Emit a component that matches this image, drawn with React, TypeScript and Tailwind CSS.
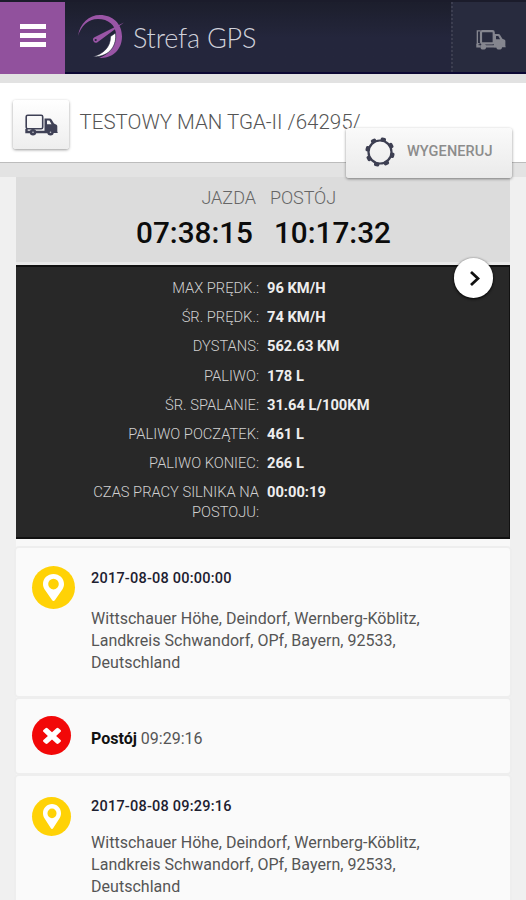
interface Stat {
  label: string;
  value: string;
}

interface RouteEvent {
  type: "point" | "stop";
  time: string;
  address?: string[];
}

const ADDRESS = [
  "Wittschauer Höhe, Deindorf, Wernberg-Köblitz,",
  "Landkreis Schwandorf, OPf, Bayern, 92533,",
  "Deutschland",
];

const STATS: Stat[] = [
  { label: "MAX PRĘDK.:", value: "96 KM/H" },
  { label: "ŚR. PRĘDK.:", value: "74 KM/H" },
  { label: "DYSTANS:", value: "562.63 KM" },
  { label: "PALIWO:", value: "178 L" },
  { label: "ŚR. SPALANIE:", value: "31.64 L/100KM" },
  { label: "PALIWO POCZĄTEK:", value: "461 L" },
  { label: "PALIWO KONIEC:", value: "266 L" },
  { label: "CZAS PRACY SILNIKA NA POSTOJU:", value: "00:00:19" },
];

const EVENTS: RouteEvent[] = [
  { type: "point", time: "2017-08-08 00:00:00", address: ADDRESS },
  { type: "stop", time: "09:29:16" },
  { type: "point", time: "2017-08-08 09:29:16", address: ADDRESS },
];

function Logo() {
  return (
    <svg className="w-[46px] h-[44px]" viewBox="0 0 46 44" fill="none">
      <path d="M0 21C2 8 11 0 22 0c13 0 22 9 22 21.500C44 35 34 44 21 42.800c10-3 17-12 17-22.800C38 10 30 4 20 4 10 4 3 11 0 21Z" fill="#9a55a6" />
      <path d="M32.500 21.500 37.500 18C39 29 33 42 15 41.800c10-3 17.500-9 17.500-20.300Z" fill="#fff" stroke="#22243a" strokeWidth=".6" />
      <path d="M46 7.500 16.500 22.300a2.900 2.900 0 1 0 3 5L46 7.500Z" fill="#9a55a6" />
      <circle cx="17.700" cy="25" r="1.100" fill="#22243a" />
    </svg>
  );
}

function TruckIcon({ className, double }: { className: string; double?: boolean }) {
  return (
    <svg className={className} viewBox="0 0 33 22" fill="none" stroke="currentColor">
      {double && <path d="M5 1H1.500v14H4" strokeWidth="1.500" />}
      <rect x={double ? 5.5 : 1.2} y="1.200" width={double ? 14 : 16.500} height="13.500" rx="1.500" strokeWidth={double ? 2.4 : 1.6} />
      <path d="M1.500 15v3H5M10 18h13" strokeWidth="2.400" />
      <path fillRule="evenodd" d="M19.500 4.500h5c1 0 1.700.4 2.200 1.200L29 9.500l2.500 1.200c.6.400.8.800.8 1.500V17.500l.5 1.500H19.500V4.500Zm2.500 2v3.800h4.500l-1.800-3.300c-.2-.4-.5-.5-1-.5H22Z" fill="currentColor" stroke="none" />
      <circle cx="8" cy="18.300" r="3.200" fill="currentColor" stroke="none" />
      <circle cx="25.500" cy="18.300" r="3.200" fill="currentColor" stroke="none" />
      {!double && (
        <>
          <circle cx="8" cy="18.300" r=".8" fill="#c9cad0" stroke="none" />
          <circle cx="25.500" cy="18.300" r=".8" fill="#c9cad0" stroke="none" />
        </>
      )}
    </svg>
  );
}

function GearIcon() {
  return (
    <svg className="w-[30px] h-[30px] text-[#3d3f52]" viewBox="-15 -15 30 30" fill="none" stroke="currentColor">
      <circle r="11.500" strokeWidth="2.200" />
      {[15, 60, 105, 150, 195, 240, 285, 330].map((deg) => (
        <rect key={deg} x="-2.700" y="-14.700" width="5.400" height="4" rx="1.500" fill="currentColor" stroke="none" transform={`rotate(${deg})`} />
      ))}
    </svg>
  );
}

function EventIcon({ type, large }: { type: RouteEvent["type"]; large: boolean }) {
  if (type === "stop") {
    return (
      <div className="w-[39px] h-[39px] rounded-full bg-[#f20808] flex items-center justify-center">
        <svg className="w-[18px] h-[18px] mb-0.5 ml-px" viewBox="302 238 1188 1316" preserveAspectRatio="none" fill="#fff">
          <path d="M1490 1322q0 40-28 68l-136 136q-28 28-68 28t-68-28l-294-294-294 294q-28 28-68 28t-68-28l-136-136q-28-28-28-68t28-68l294-294-294-294q-28-28-28-68t28-68l136-136q28-28 68-28t68 28l294 294 294-294q28-28 68-28t68 28l136 136q28 28 28 68t-28 68l-294 294 294 294q28 28 28 68z" />
        </svg>
      </div>
    );
  }
  return (
    <div className={`${large ? "w-[43px] h-[43px]" : "w-[39px] h-[39px]"} rounded-full bg-[#ffd206] flex items-center justify-center`}>
      <svg className={large ? "w-[21px] h-[27px]" : "w-[18px] h-[25px]"} viewBox="0 0 21 27" preserveAspectRatio="none" fill="#fff">
        <path fillRule="evenodd" d="M10.500 0C16.300 0 21 4.300 21 10c0 2-.6 3.600-1.500 5.200L12 26c-.8 1.300-2.200 1.300-3 0L1.500 15.200C.6 13.600 0 12 0 10 0 4.300 4.700 0 10.500 0Zm0 4.800a5.300 5.300 0 1 0 0 10.600 5.300 5.300 0 0 0 0-10.600Z" />
      </svg>
    </div>
  );
}

function Header() {
  return (
    <header className="h-[74px] flex border-t-2 border-[#1b1c2b] bg-linear-to-b from-[#1c1e2c] to-[#24263c] to-50% shadow-[inset_0_-2px_0_#0b0733]">
      <button className="w-[65px] bg-[#91519d] flex flex-col items-center pt-[22px] gap-1">
        <span className="w-[26px] h-[5px] bg-white" />
        <span className="w-[26px] h-[5px] bg-white" />
        <span className="w-[26px] h-[5px] bg-white" />
      </button>
      <div className="flex-1 flex pl-[13px] pt-[13px]">
        <Logo />
        <span className="ml-[9px] mt-[4px] font-['Lato'] font-light text-[27px] leading-[38px] tracking-[-0.2px] text-[#d0d1da] whitespace-nowrap">
          Strefa GPS
        </span>
      </div>
      <div className="w-[75px] mb-0.5 border-l-2 border-dotted border-[#3c3e50] bg-[#282b3e] pt-[28px] pl-[22px]">
        <TruckIcon className="w-[32px] h-[20px] text-[#85868f]" double />
      </div>
    </header>
  );
}

export default function App() {
  return (
    <div className="w-full h-[900px] overflow-hidden bg-[#f0f0f0] font-['Roboto',sans-serif]">
      <Header />
      <div className="h-[9px] bg-[#e2e2e2]" />
      <div className="relative h-[80px] bg-white border-b border-[#bcbcbc] flex pl-[13px] pt-[17px]">
        <div className="w-[56px] h-[49px] rounded-[3px] bg-linear-to-b from-white to-[#eeeeee] shadow-[0_1px_3px_rgba(0,0,0,0.4)] flex items-center justify-center">
          <TruckIcon className="w-[33px] h-[22px] text-[#3f4156]" />
        </div>
        <h1 className="ml-[10.500px] mt-[8px] font-light text-[20.500px] leading-[28px] text-[#555] whitespace-nowrap">
          TESTOWY MAN TGA-II /64295/
        </h1>
        <button className="absolute left-[346px] top-[45px] w-[166px] h-[50px] rounded-[3px] bg-linear-to-b from-[#fafafa] to-[#eaeaea] shadow-[0_1px_3px_rgba(0,0,0,0.45)] flex items-center pl-[19px] pb-0.5">
          <GearIcon />
          <span className="ml-[12px] text-[14.500px] tracking-[0.1px] text-[#8c8c8c] font-medium">WYGENERUJ</span>
        </button>
      </div>
      <div className="h-[14px] bg-[#e3e3e3]" />

      <main className="mx-4 w-[494px] bg-[#f8f8f8]">
        <div className="h-[88px] bg-[#dcdcdc] border-b-3 border-[#e9e9e9] pt-[9px]">
          <div className="flex text-[18px] leading-[24px] font-light text-[#666]">
            <span className="w-[240px] text-right">JAZDA</span>
            <span className="ml-[14px] tracking-[-0.1px]">POSTÓJ</span>
          </div>
          <div className="flex mt-[5px] text-[29.700px] leading-[36px] font-medium text-[#0c0c0c]">
            <span className="w-[237px] text-right">07:38:15</span>
            <span className="ml-[21px]">10:17:32</span>
          </div>
        </div>

        <div className="relative h-[274px] bg-[#282828] border-y-2 border-r border-[#111] pt-[11px]">
          <button className="absolute right-[16px] top-[-9px] w-[39px] h-[40px] rounded-full bg-white shadow-[0_1px_3px_#000] flex items-center justify-center">
            <svg className="w-[12px] h-[17px]" viewBox="0 0 12 17" fill="none" stroke="#111" strokeWidth="2.800">
              <path d="m3 2 7 6.500L3 15" />
            </svg>
          </button>
          <dl className="flex flex-col gap-[9.200px]">
            {STATS.map((stat) => (
              <div key={stat.label} className="flex text-[14.700px] leading-[20px]">
                <dt className="w-[243px] pl-[50px] text-right font-light text-[#d0d0d0]">{stat.label}</dt>
                <dd className="ml-[8px] font-bold text-[#eee]">{stat.value}</dd>
              </div>
            ))}
          </dl>
        </div>

        <div className="pt-[9px] flex flex-col gap-[3px]">
          {EVENTS.map((event, i) => (
            <section
              key={i}
              className={`flex rounded-[3px] bg-[#fafafa] shadow-[0_0_0_2px_#eeeeee] ${
                event.type === "stop" ? "h-[74px]" : "h-[148px]"
              }`}
            >
              <div className={`w-[75px] shrink-0 pl-4 ${event.type === "stop" ? "pt-[17px]" : i === 0 ? "pt-[18px]" : "pt-[21px]"}`}>
                <EventIcon type={event.type} large={i === 0} />
              </div>
              {event.type === "stop" ? (
                <p className="pt-[29px] text-[16px] leading-[22px] text-[#555]">
                  <b className="text-[#111]">Postój</b> {event.time}
                </p>
              ) : (
                <div className="pt-[21px]">
                  <p className="text-[14.500px] leading-[20px] tracking-[0.220px] font-medium text-[#1d2030]">{event.time}</p>
                  <div className={i === 0 ? "mt-[19px]" : "mt-[15px]"}>
                    {event.address?.map((line) => (
                      <p key={line} className="text-[16px] leading-[22px] tracking-[0.030px] text-[#555] whitespace-nowrap">{line}</p>
                    ))}
                  </div>
                </div>
              )}
            </section>
          ))}
        </div>
      </main>
    </div>
  );
}
